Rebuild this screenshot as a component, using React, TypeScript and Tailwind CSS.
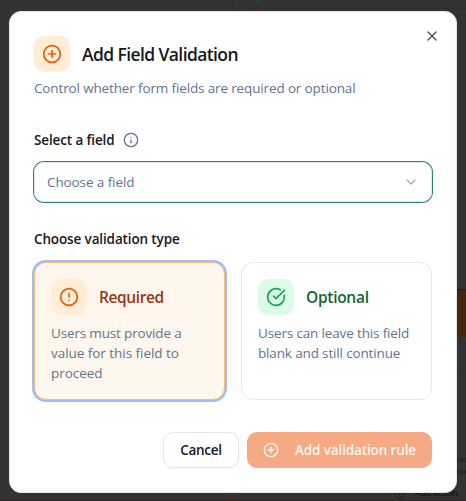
import { CircleAlert, CircleCheckBig, CirclePlus, ChevronDown, Info, X } from "lucide-react";
import type { ReactNode } from "react";

function Backdrop() {
  return (
    <div className="absolute inset-0 overflow-hidden bg-[#333333]">
      <div className="absolute left-[232px] top-0 h-full w-px bg-[#2e2e2e]" />
      <div className="absolute left-[244px] -top-5 h-[29px] w-[240px] rounded-lg border border-[#2d2d2d]" />
      <div className="absolute left-[255px] -top-[5px] size-[7px] rounded-full bg-[#1f4a2e]" />
      <div className="absolute left-[457px] top-[289px] h-12 w-3 border-t border-[#2b1a0c] bg-[#40290f]" />
      <div className="absolute left-[457px] top-[371px] h-px w-3 bg-[#2d2d2d]" />
      <div className="absolute left-[457px] top-[453px] flex flex-col text-[8px] leading-[12px] tracking-[-0.8px] text-[#1a1e26]">
        <span className="h-3">uld</span>
        <span className="h-3">our</span>
      </div>
      <div className="absolute left-[232px] top-[493px] h-2 w-[2px] bg-[#4b2a17]" />
      <div className="absolute left-[385px] top-[482px] h-[17px] w-[80px] rounded-md border border-[#2d2d2d]" />
      <div className="absolute left-[394px] top-[487px] flex items-center gap-[10px] whitespace-nowrap text-[9px] font-semibold leading-3 tracking-[-0.4px] text-[#1c1110]">
        <CirclePlus className="size-[11px] text-[#331711]" />
        Add action
      </div>
      <div className="absolute bottom-0 left-0 h-px w-full bg-[#2b2322]" />
    </div>
  );
}

function IconTile({ className, children }: { className: string; children: ReactNode }) {
  return (
    <div className={`flex size-9 shrink-0 items-center justify-center rounded-[10px] ${className}`}>
      {children}
    </div>
  );
}

export default function App() {
  return (
    <div className="relative flex h-[501px] w-[466px] items-start overflow-hidden pl-[9px] pt-[11px] font-['Open_Sans','Noto_Sans',sans-serif] text-[#18181b]">
      <Backdrop />
      <div className="relative flex h-[482px] w-[448px] flex-col rounded-xl border border-slate-200 bg-white p-6">
        <button className="absolute right-4 top-4 text-[#52525b]" aria-label="Close">
          <X className="size-4" strokeWidth={2} />
        </button>

        <div className="flex items-center gap-3">
          <IconTile className="bg-[#ffedd5] text-[#ea580c]">
            <CirclePlus className="size-5" />
          </IconTile>
          <h2 className="whitespace-nowrap text-[17.5px] font-semibold leading-7 tracking-[-0.6px]">
            Add Field Validation
          </h2>
        </div>
        <p className="mt-1.5 whitespace-nowrap text-[13.5px] leading-5 tracking-[-0.14px] text-slate-500">
          Control whether form fields are required or optional
        </p>

        <div className="mt-8 flex h-5 items-center gap-2">
          <span className="whitespace-nowrap text-[13.5px] font-semibold leading-5 tracking-[-0.12px]">
            Select a field
          </span>
          <Info className="size-4 text-slate-500" />
        </div>
        <button className="mt-3 flex h-10 items-center justify-between rounded-[10px] border border-slate-200 px-3 ring-1 ring-[#2f807a]">
          <span className="whitespace-nowrap text-[13.5px] leading-5 tracking-[-0.1px] text-slate-500">
            Choose a field
          </span>
          <ChevronDown className="size-4 text-[#a4acb9]" />
        </button>

        <div className="mt-[27px] whitespace-nowrap text-[13.5px] font-semibold leading-5 tracking-[-0.13px]">
          Choose validation type
        </div>
        <div className="mt-[13px] grid h-[138px] grid-cols-2 gap-4">
          <div className="rounded-xl border border-[#fdba74] bg-[#fff7ed] p-4 ring-2 ring-[#9dbdfb]">
            <div className="flex items-center gap-3">
              <IconTile className="bg-[#ffedd5] text-[#ea580c]">
                <CircleAlert className="size-5" />
              </IconTile>
              <span className="text-[15.5px] font-semibold leading-6 tracking-[-0.38px] text-[#9a3412]">
                Required
              </span>
            </div>
            <p className="mt-2 whitespace-nowrap text-[13.5px] leading-5 tracking-[-0.16px] text-slate-500">
              Users must provide a<br />
              <span className="tracking-[-0.04px]">value for this field to</span>
              <br />
              <span className="tracking-[-0.04px]">proceed</span>
            </p>
          </div>
          <div className="rounded-xl border border-slate-200 p-4">
            <div className="flex items-center gap-3">
              <IconTile className="bg-[#dcfce7] text-[#16a34a]">
                <CircleCheckBig className="size-5" />
              </IconTile>
              <span className="text-[15.5px] font-semibold leading-6 tracking-[-0.28px] text-[#166534]">
                Optional
              </span>
            </div>
            <p className="mt-2 whitespace-nowrap text-[13.5px] leading-5 tracking-[-0.15px] text-slate-500">
              Users can leave this field
              <br />
              blank and still continue
            </p>
          </div>
        </div>

        <div className="mt-8 flex justify-end gap-2">
          <button className="h-9 w-[76px] rounded-[10px] border border-slate-200 text-[13.5px] font-semibold leading-5 tracking-[-0.3px] shadow-xs">
            Cancel
          </button>
          <button className="flex h-9 w-[185px] items-center gap-4 whitespace-nowrap rounded-[10px] bg-[#f5aa85] pl-4 text-[13.5px] font-semibold leading-5 tracking-[-0.13px] text-[#fff5ef] shadow-xs">
            <CirclePlus className="size-4" />
            Add validation rule
          </button>
        </div>
      </div>
    </div>
  );
}
